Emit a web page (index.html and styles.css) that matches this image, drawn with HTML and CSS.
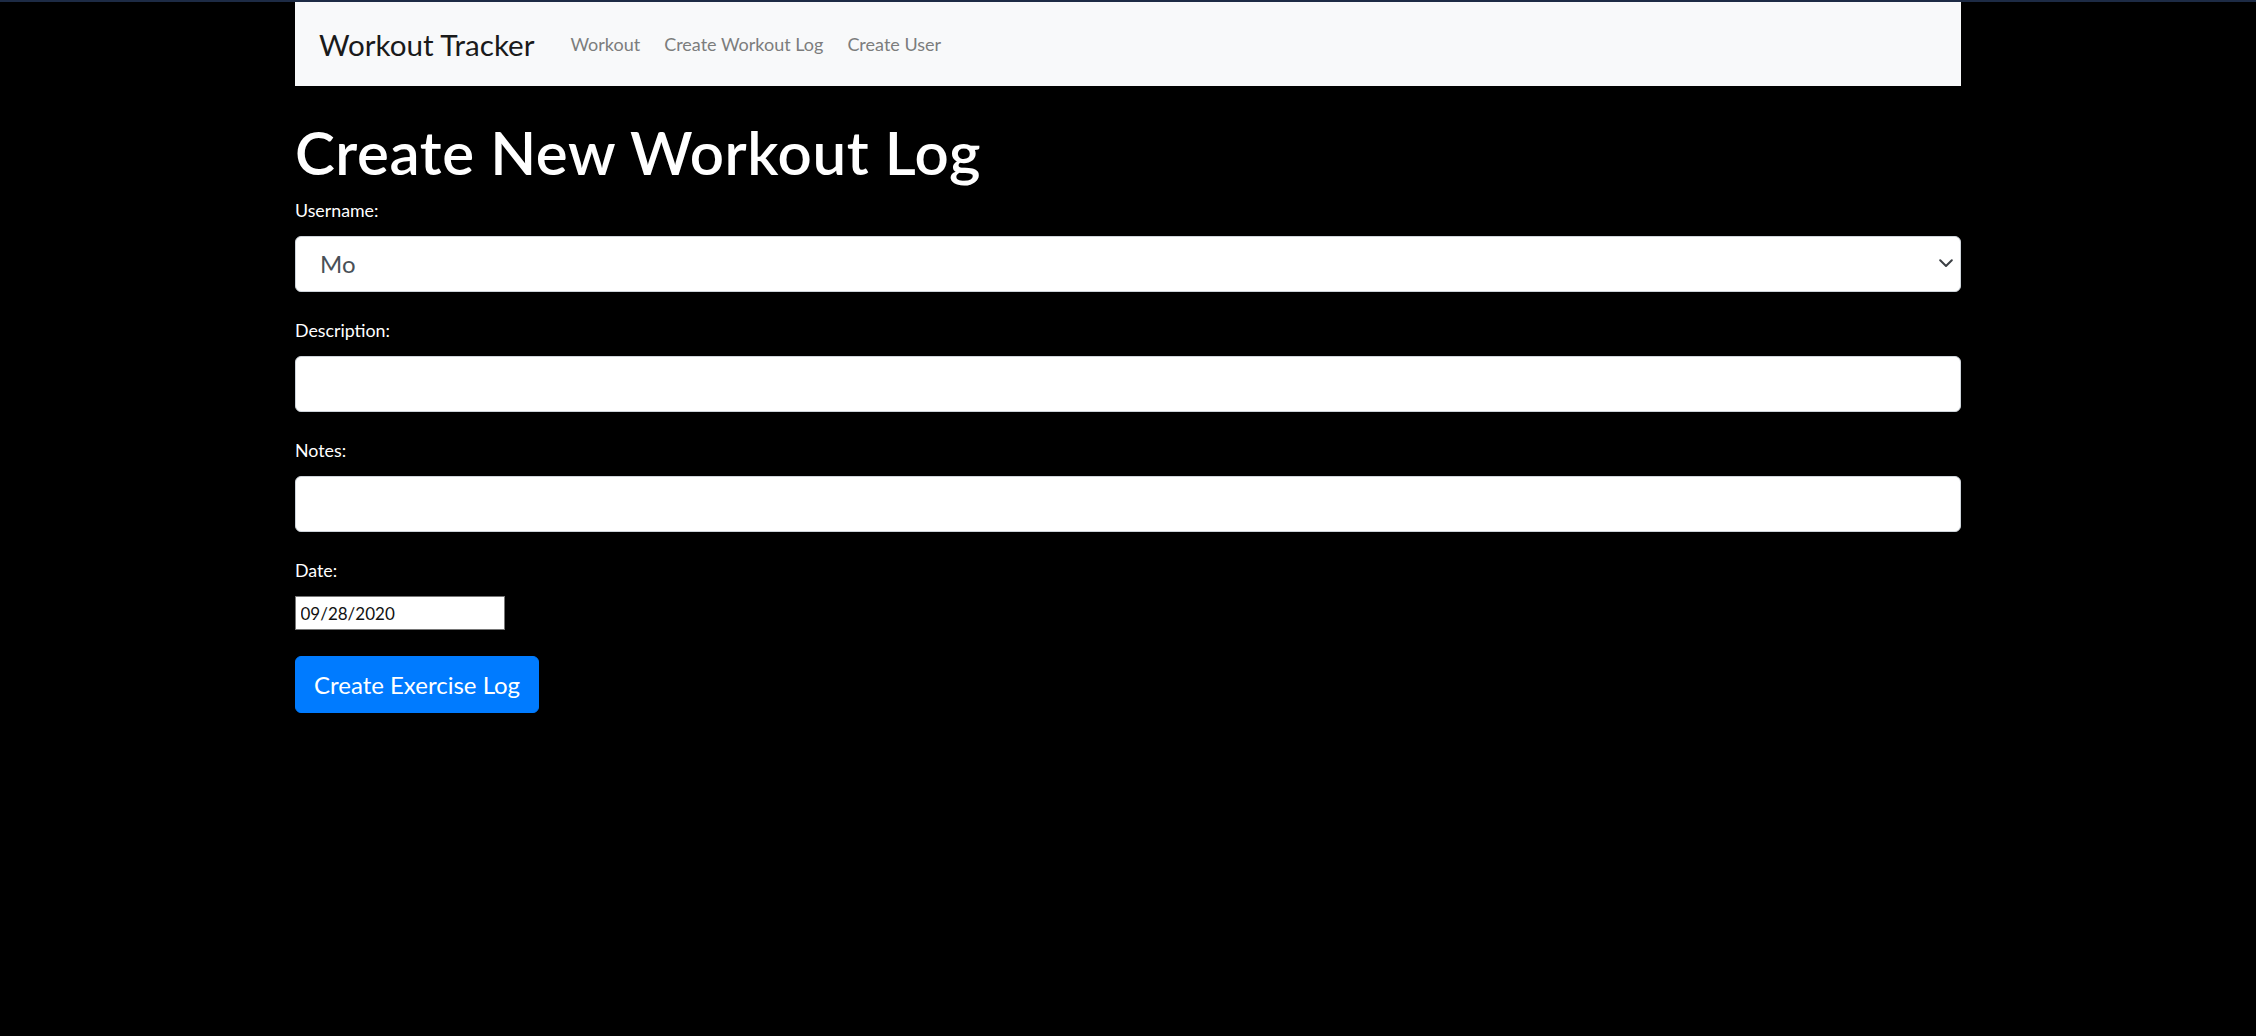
FILE: index.html
```html
<!DOCTYPE html>
<html lang="en">
<head>
<meta charset="utf-8">
<title>Workout Tracker</title>
<link rel="stylesheet" href="styles.css">
</head>
<body>
<div class="container">
  <nav class="navbar">
    <a class="brand" href="#">Workout Tracker</a>
    <ul class="nav">
      <li><a class="nav-link" href="#">Workout</a></li>
      <li><a class="nav-link" href="#">Create Workout Log</a></li>
      <li><a class="nav-link" href="#">Create User</a></li>
    </ul>
  </nav>
  <main>
    <h1 class="title">Create New Workout Log</h1>
    <form class="form">
      <div class="form-group">
        <label class="label">Username:</label>
        <div class="select-wrap">
          <select class="control select">
            <option>Mo</option>
          </select>
          <svg class="chevron" width="14" height="9" viewBox="0 0 14 9"><path d="M1.2 1.2 L7 7 L12.8 1.2" fill="none" stroke="#3b3f44" stroke-width="2" stroke-linecap="round" stroke-linejoin="round"/></svg>
        </div>
      </div>
      <div class="form-group">
        <label class="label">Description:</label>
        <input class="control" type="text">
      </div>
      <div class="form-group">
        <label class="label">Notes:</label>
        <input class="control" type="text">
      </div>
      <div class="form-group date-group">
        <label class="label">Date:</label>
        <input class="date-input" type="text" value="09/28/2020">
      </div>
      <button class="btn" type="button">Create Exercise Log</button>
    </form>
  </main>
</div>
</body>
</html>
```

FILE: styles.css
```css
* { box-sizing: border-box; }

html, body {
  margin: 0;
  padding: 0;
  background: #000;
}

body {
  border-top: 2px solid #1d2b45;
  font-family: Lato, "Open Sans", sans-serif;
  color: #fff;
  min-height: 1036px;
}

.container {
  width: 1666px;
  margin: 0 auto;
}

.navbar {
  display: flex;
  align-items: center;
  height: 84px;
  padding: 12px 24px;
  background: #f8f9fa;
}

.brand {
  font-size: 29.6px;
  line-height: 45px;
  padding: 7.5px 0;
  margin-right: 24px;
  color: #1a1a1a;
  text-decoration: none;
}

.nav {
  display: flex;
  list-style: none;
  margin: 0;
  padding: 0;
}

.nav-link {
  display: block;
  padding: 12px 12px;
  font-size: 18px;
  line-height: 24px;
  color: #7c7d7d;
  text-decoration: none;
}

.title {
  margin: 30px 0 8px;
  font-size: 60px;
  line-height: 72px;
  font-weight: 600;
  letter-spacing: 0.6px;
}

.form-group {
  margin-bottom: 24px;
}

.date-group {
  margin-bottom: 26px;
}

.label {
  display: block;
  font-size: 17.8px;
  line-height: 28px;
  margin-bottom: 12px;
  color: #fff;
}

.control {
  display: block;
  width: 100%;
  height: 56px;
  padding: 9px 18px;
  font-family: Lato, "Open Sans", sans-serif;
  font-size: 24px;
  line-height: 36px;
  color: #495057;
  background: #fff;
  border: 1.5px solid #ced4da;
  border-radius: 6px;
  outline: none;
}

.select-wrap {
  position: relative;
}

.select {
  appearance: none;
  -webkit-appearance: none;
  padding-left: 24px;
}

.chevron {
  position: absolute;
  right: 8px;
  top: 23px;
  pointer-events: none;
}

.date-input {
  display: block;
  width: 210px;
  height: 34px;
  padding: 0 4.5px;
  font-family: Lato, "Open Sans", sans-serif;
  font-size: 17px;
  color: #111;
  background: #fff;
  border: 1px solid #767676;
  border-radius: 0;
  outline: none;
}

.btn {
  display: inline-block;
  height: 57px;
  padding: 9px 18px;
  font-family: Lato, "Open Sans", sans-serif;
  font-size: 24px;
  line-height: 36px;
  color: #fff;
  background: #007bff;
  border: 1.5px solid #007bff;
  border-radius: 6px;
  cursor: pointer;
}
```
